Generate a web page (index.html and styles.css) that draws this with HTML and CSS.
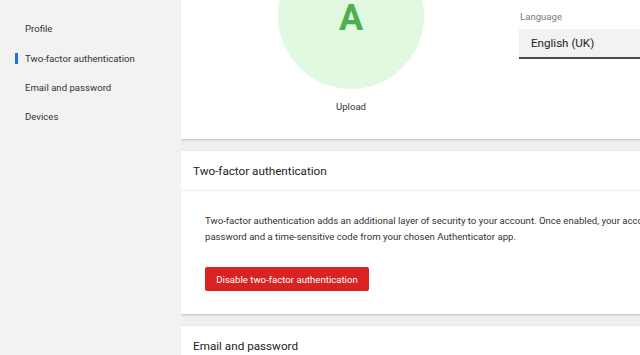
FILE: index.html
```html
<!DOCTYPE html>
<html lang="en">
<head>
<meta charset="utf-8">
<title>Account settings</title>
<link rel="stylesheet" href="styles.css">
</head>
<body>
<div class="app">
  <nav class="sidebar">
    <a class="nav-item">Profile</a>
    <a class="nav-item active">Two-factor authentication</a>
    <a class="nav-item">Email and password</a>
    <a class="nav-item">Devices</a>
  </nav>
  <main class="main">
    <section class="card profile-card">
      <div class="avatar-col">
        <div class="avatar">A</div>
        <div class="upload">Upload</div>
      </div>
      <div class="fields-col">
        <label class="field-label">Language</label>
        <div class="select">English (UK)</div>
      </div>
    </section>
    <section class="card">
      <header class="card-header">Two-factor authentication</header>
      <div class="card-body">
        <p class="desc">Two-factor authentication adds an additional layer of security to your account. Once enabled, your account will require both your<br>password and a time-sensitive code from your chosen Authenticator app.</p>
        <button class="btn-danger">Disable two-factor authentication</button>
      </div>
    </section>
    <section class="card">
      <header class="card-header">Email and password</header>
      <div class="card-body">
        <p class="desc">Change your email address or password.</p>
      </div>
    </section>
  </main>
</div>
</body>
</html>
```
FILE: styles.css
```css
html, body {
  margin: 0;
  padding: 0;
  height: 100%;
  overflow: hidden;
}
body {
  font-family: Roboto, "Liberation Sans", Arial, sans-serif;
  background: #f2f2f2;
  color: #333;
}
.app {
  display: flex;
  height: 100%;
}
.sidebar {
  width: 181px;
  flex: none;
  background: #f2f2f2;
  padding-top: 14px;
  box-sizing: border-box;
  display: flex;
  flex-direction: column;
}
.nav-item {
  display: flex;
  align-items: center;
  height: 29.4px;
  padding-left: 25px;
  font-size: 9.6px;
  color: #333;
  cursor: pointer;
}
.nav-item.active {
  padding-left: 0;
}
.nav-item.active::before {
  content: "";
  width: 2.5px;
  height: 11px;
  background: #1a73e8;
  margin-left: 15px;
  margin-right: 7.5px;
}
.main {
  flex: 1;
  min-width: 0;
  overflow: hidden;
  background: #efefef;
  display: flex;
  flex-direction: column;
  gap: 12px;
  margin-top: -79px;
}
.card {
  width: 720px;
  flex: none;
  background: #fff;
  box-shadow: 0 1px 3px rgba(0, 0, 0, 0.14), 0 1px 1px rgba(0, 0, 0, 0.06);
}
.profile-card {
  display: flex;
  padding: 22px 0 24px;
}
.avatar-col {
  width: 340px;
  display: flex;
  flex-direction: column;
  align-items: center;
}
.avatar {
  width: 146px;
  height: 146px;
  border-radius: 50%;
  background: #e1f9e1;
  color: #4caf50;
  font-weight: 700;
  font-size: 36px;
  line-height: 1;
  display: flex;
  justify-content: center;
  padding-top: 57px;
  box-sizing: border-box;
}
.upload {
  margin-top: 10px;
  font-size: 9.6px;
  line-height: 16px;
  color: #333;
}
.fields-col {
  display: flex;
  flex-direction: column;
  padding-top: 67px;
  flex: 1;
  margin-left: -2px;
}
.field-label {
  font-size: 9.6px;
  line-height: 14px;
  color: #7a7a7a;
  padding-left: 1px;
}
.select {
  margin-top: 5px;
  height: 28px;
  background: #f2f2f2;
  border-bottom: 2px solid #4a4a4a;
  font-size: 11.6px;
  color: #222;
  display: flex;
  align-items: center;
  padding-left: 12px;
}
.card-header {
  height: 40px;
  box-sizing: border-box;
  border-bottom: 1px solid #ececec;
  padding-left: 12px;
  display: flex;
  align-items: center;
  font-size: 11.7px;
  color: #222;
}
.card-body {
  padding: 22px 24px 23px;
}
.desc {
  margin: 0;
  font-size: 9.6px;
  line-height: 16px;
  color: #333;
}
.btn-danger {
  margin-top: 22px;
  width: 164px;
  height: 24px;
  border: none;
  border-radius: 2px;
  background: #d92222;
  color: #fff;
  font-family: inherit;
  font-size: 9.6px;
  padding: 0;
  cursor: pointer;
}
```
